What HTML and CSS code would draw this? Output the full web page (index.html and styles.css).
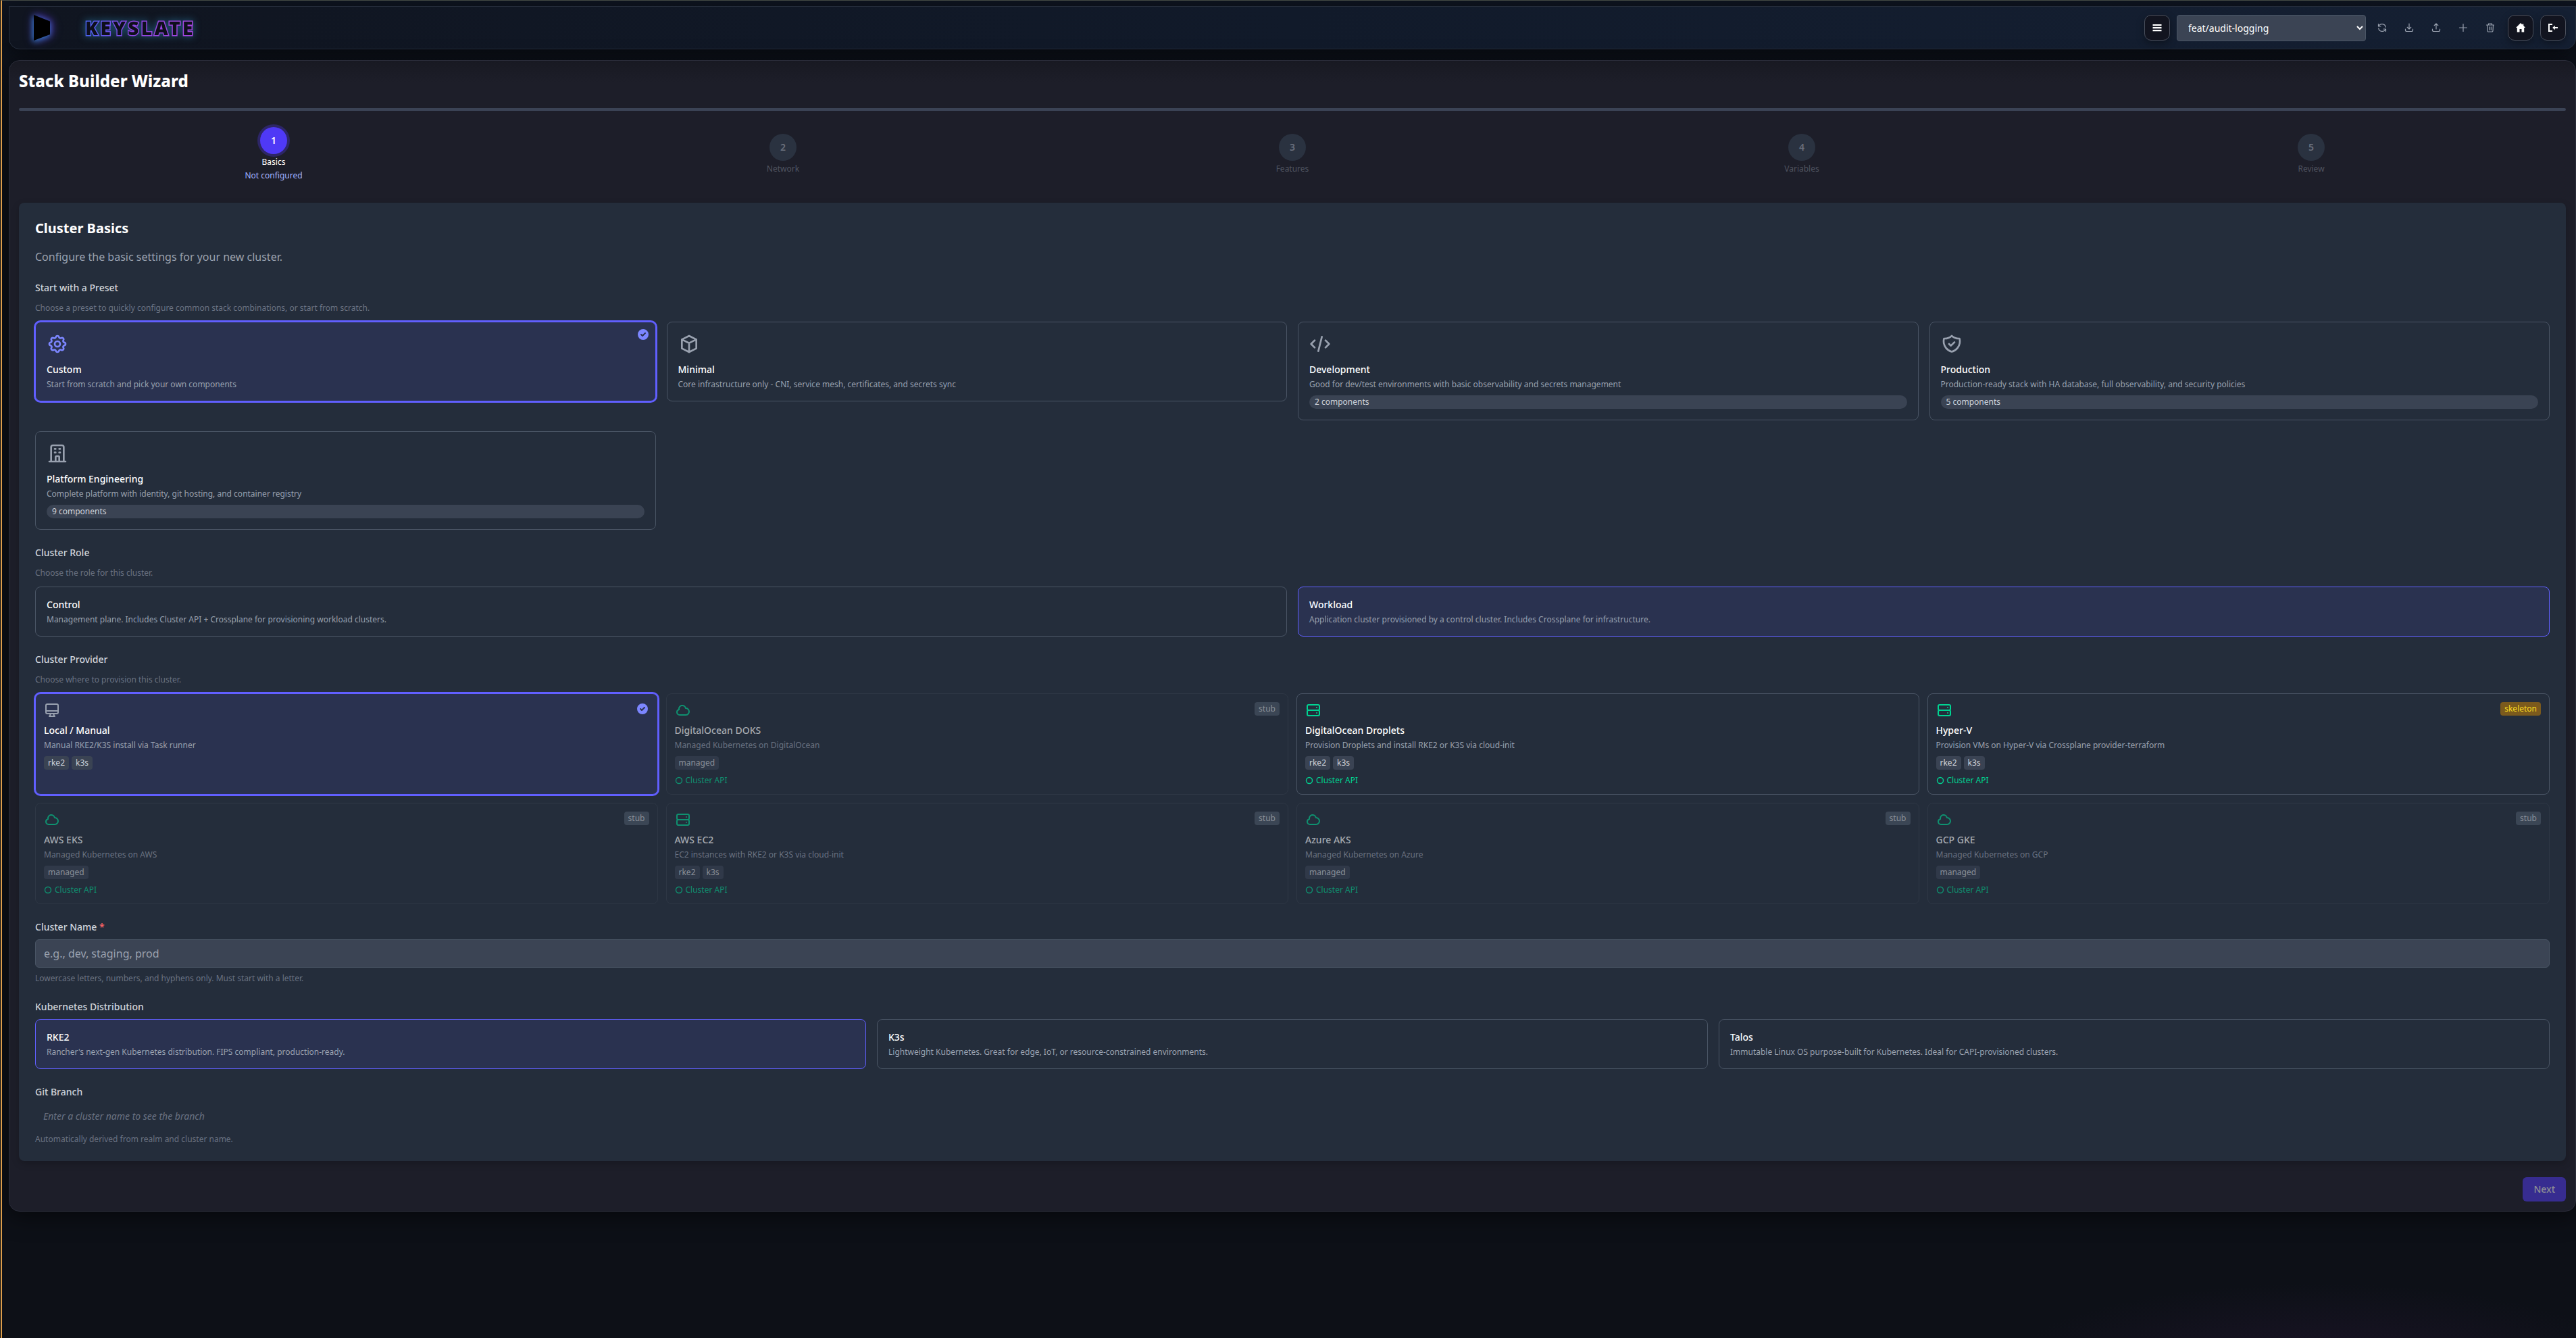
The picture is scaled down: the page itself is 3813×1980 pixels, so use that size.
FILE: index.html
```html
<!DOCTYPE html>
<html lang="en">
<head>
    <meta charset="utf-8">
    <title>Keyslate - Stack Builder Wizard</title>
    <link rel="stylesheet" href="styles.css">
</head>
<body>
    <svg class="sprite" aria-hidden="true">
        <symbol id="cog" viewBox="0 0 24 24"><path d="M10.325 4.317c.426-1.756 2.924-1.756 3.35 0a1.724 1.724 0 002.573 1.066c1.543-.94 3.31.826 2.37 2.37a1.724 1.724 0 001.065 2.572c1.756.426 1.756 2.924 0 3.35a1.724 1.724 0 00-1.066 2.573c.94 1.543-.826 3.31-2.37 2.37a1.724 1.724 0 00-2.572 1.065c-.426 1.756-2.924 1.756-3.35 0a1.724 1.724 0 00-2.573-1.066c-1.543.94-3.31-.826-2.37-2.37a1.724 1.724 0 00-1.065-2.572c-1.756-.426-1.756-2.924 0-3.35a1.724 1.724 0 001.066-2.573c-.94-1.543.826-3.31 2.37-2.37.996.608 2.296.07 2.572-1.065z"/><path d="M15 12a3 3 0 11-6 0 3 3 0 016 0z"/></symbol>
        <symbol id="cube" viewBox="0 0 24 24"><path d="M20 7l-8-4-8 4m16 0l-8 4m8-4v10l-8 4m0-10L4 7m8 4v10M4 7v10l8 4"/></symbol>
        <symbol id="code" viewBox="0 0 24 24"><path d="M10 20l4-16m4 4l4 4-4 4M6 16l-4-4 4-4"/></symbol>
        <symbol id="shield" viewBox="0 0 24 24"><path d="M9 12l2 2 4-4m5.618-4.016A11.955 11.955 0 0112 2.944a11.955 11.955 0 01-8.618 3.040A12.020 12.020 0 003 9c0 5.591 3.824 10.290 9 11.622 5.176-1.332 9-6.030 9-11.622 0-1.042-.133-2.052-.382-3.016z"/></symbol>
        <symbol id="building" viewBox="0 0 24 24"><path d="M19 21V5a2 2 0 00-2-2H7a2 2 0 00-2 2v16m14 0h2m-2 0h-5m-9 0H3m2 0h5M9 7h1m-1 4h1m4-4h1m-1 4h1m-5 10v-5a1 1 0 011-1h2a1 1 0 011 1v5m-4 0h4"/></symbol>
        <symbol id="desktop" viewBox="0 0 24 24"><path d="M9.75 17L9 20l-1 1h8l-1-1-.75-3M3 13h18M5 17h14a2 2 0 002-2V5a2 2 0 00-2-2H5a2 2 0 00-2 2v10a2 2 0 002 2z"/></symbol>
        <symbol id="cloud" viewBox="0 0 24 24"><path d="M3 15a4 4 0 004 4h9a5 5 0 10-.1-9.999 5.002 5.002 0 10-9.78 2.096A4.001 4.001 0 003 15z"/></symbol>
        <symbol id="server" viewBox="0 0 24 24"><path d="M5 12h14M5 12a2 2 0 01-2-2V6a2 2 0 012-2h14a2 2 0 012 2v4a2 2 0 01-2 2M5 12a2 2 0 00-2 2v4a2 2 0 002 2h14a2 2 0 002-2v-4a2 2 0 00-2-2m-2-4h.01M17 16h.01"/></symbol>
        <symbol id="check" viewBox="0 0 20 20"><path fill-rule="evenodd" d="M10 18a8 8 0 100-16 8 8 0 000 16zm3.707-9.293a1 1 0 00-1.414-1.414L9 10.586 7.707 9.293a1 1 0 00-1.414 1.414l2 2a1 1 0 001.414 0l4-4z"/></symbol>
        <symbol id="ring" viewBox="0 0 12 12"><circle cx="6" cy="6" r="4.500"/></symbol>
    </svg>

    <header class="topbar">
        <a class="brand" href="#">
            <svg class="brand-mark" viewBox="0 0 24 38"><path d="M0 0L24 9.500V29L0 38z"/></svg>
            <span class="brand-name">KEYSLATE</span>
        </a>
        <div class="toolbar">
            <button class="square-btn" type="button" aria-label="Menu">
                <svg viewBox="0 0 16 16"><path d="M1.500 3h13v2.200h-13zM1.500 7h13v2.200h-13zM1.500 11h13v2.200h-13z"/></svg>
            </button>
            <div class="branch-tools">
                <select class="branch-select" aria-label="Branch">
                    <option>feat/audit-logging</option>
                </select>
                <button class="icon-btn" type="button" aria-label="Refresh">
                    <svg viewBox="0 0 16 16"><path d="M2.500 2.500v3.500h3.500M2.800 6A5.500 5.500 0 0113.300 7.200M13.500 13.500v-3.500h-3.500M13.200 10A5.500 5.500 0 012.700 8.800"/></svg>
                </button>
                <button class="icon-btn" type="button" aria-label="Pull">
                    <svg viewBox="0 0 16 16"><path d="M8 2v8M5.200 7.300L8 10l2.800-2.700M2.500 10v1.500a2 2 0 002 2h7a2 2 0 002-2V10"/></svg>
                </button>
                <button class="icon-btn" type="button" aria-label="Push">
                    <svg viewBox="0 0 16 16"><path d="M8 10V2M5.200 4.700L8 2l2.800 2.700M2.500 10v1.500a2 2 0 002 2h7a2 2 0 002-2V10"/></svg>
                </button>
                <button class="icon-btn" type="button" aria-label="New branch">
                    <svg viewBox="0 0 16 16"><path d="M8 2.500v11M2.500 8h11"/></svg>
                </button>
                <button class="icon-btn" type="button" aria-label="Delete branch">
                    <svg viewBox="0 0 16 16"><path d="M2.500 4h11M5.500 4V2h5v2M3.500 4l.5 8.500a1.500 1.500 0 001.500 1.500h5a1.500 1.500 0 001.500-1.500l.5-8.500M6.700 6.800v4.400M9.300 6.800v4.400"/></svg>
                </button>
            </div>
            <a class="square-btn" href="#" aria-label="Home">
                <svg viewBox="0 0 16 16"><path d="M8 1l2.500 2.400V2.500h1.800v2.600L15 8h-1.800v6.500H9.500V10h-3v4.500H2.800V8H1z"/></svg>
            </a>
            <button class="square-btn" type="button" aria-label="Log out">
                <svg viewBox="0 0 16 16"><path d="M1 2h6v2H3v8h4v2H1zM7.200 8l3.600-3.300v2.200H15v2.200h-4.200v2.200z"/></svg>
            </button>
        </div>
    </header>

    <main class="wizard">
        <h1>Stack Builder Wizard</h1>
        <div class="progress"></div>

        <ol class="steps">
            <li class="step active">
                <span class="step-number">1</span>
                <span>Basics</span>
                <span class="step-status">Not configured</span>
            </li>
            <li class="step"><span class="step-number">2</span><span>Network</span></li>
            <li class="step"><span class="step-number">3</span><span>Features</span></li>
            <li class="step"><span class="step-number">4</span><span>Variables</span></li>
            <li class="step"><span class="step-number">5</span><span>Review</span></li>
        </ol>

        <form class="panel">
            <h2>Cluster Basics</h2>
            <p class="intro">Configure the basic settings for your new cluster.</p>

            <section class="field">
                <h3>Start with a Preset</h3>
                <p class="hint">Choose a preset to quickly configure common stack combinations, or start from scratch.</p>
                <div class="grid presets">
                    <button class="card selected ringed" type="button">
                        <svg class="icon icon-lg"><use href="#cog"/></svg>
                        <span class="card-title">Custom</span>
                        <span class="card-text">Start from scratch and pick your own components</span>
                        <svg class="check"><use href="#check"/></svg>
                    </button>
                    <button class="card" type="button">
                        <svg class="icon icon-lg"><use href="#cube"/></svg>
                        <span class="card-title">Minimal</span>
                        <span class="card-text">Core infrastructure only - CNI, service mesh, certificates, and secrets sync</span>
                    </button>
                    <button class="card" type="button">
                        <svg class="icon icon-lg"><use href="#code"/></svg>
                        <span class="card-title">Development</span>
                        <span class="card-text">Good for dev/test environments with basic observability and secrets management</span>
                        <span class="count">2 components</span>
                    </button>
                    <button class="card" type="button">
                        <svg class="icon icon-lg"><use href="#shield"/></svg>
                        <span class="card-title">Production</span>
                        <span class="card-text">Production-ready stack with HA database, full observability, and security policies</span>
                        <span class="count">5 components</span>
                    </button>
                    <button class="card" type="button">
                        <svg class="icon icon-lg"><use href="#building"/></svg>
                        <span class="card-title">Platform Engineering</span>
                        <span class="card-text">Complete platform with identity, git hosting, and container registry</span>
                        <span class="count">9 components</span>
                    </button>
                </div>
            </section>

            <section class="field">
                <h3>Cluster Role</h3>
                <p class="hint">Choose the role for this cluster.</p>
                <div class="grid roles">
                    <button class="card" type="button">
                        <span class="card-title">Control</span>
                        <span class="card-text">Management plane. Includes Cluster API + Crossplane for provisioning workload clusters.</span>
                    </button>
                    <button class="card selected" type="button">
                        <span class="card-title">Workload</span>
                        <span class="card-text">Application cluster provisioned by a control cluster. Includes Crossplane for infrastructure.</span>
                    </button>
                </div>
            </section>

            <section class="field">
                <h3>Cluster Provider</h3>
                <p class="hint">Choose where to provision this cluster.</p>
                <div class="grid providers">
                    <button class="card selected ringed" type="button">
                        <span class="card-top"><svg class="icon"><use href="#desktop"/></svg><svg class="check"><use href="#check"/></svg></span>
                        <span class="card-title">Local / Manual</span>
                        <span class="card-text">Manual RKE2/K3S install via Task runner</span>
                        <span class="tags"><span class="tag">rke2</span><span class="tag">k3s</span></span>
                    </button>
                    <button class="card capi disabled" type="button" disabled>
                        <span class="card-top"><svg class="icon"><use href="#cloud"/></svg><span class="tag stub">stub</span></span>
                        <span class="card-title">DigitalOcean DOKS</span>
                        <span class="card-text">Managed Kubernetes on DigitalOcean</span>
                        <span class="tags"><span class="tag">managed</span></span>
                        <span class="api"><svg><use href="#ring"/></svg>Cluster API</span>
                    </button>
                    <button class="card capi" type="button">
                        <span class="card-top"><svg class="icon"><use href="#server"/></svg></span>
                        <span class="card-title">DigitalOcean Droplets</span>
                        <span class="card-text">Provision Droplets and install RKE2 or K3S via cloud-init</span>
                        <span class="tags"><span class="tag">rke2</span><span class="tag">k3s</span></span>
                        <span class="api"><svg><use href="#ring"/></svg>Cluster API</span>
                    </button>
                    <button class="card capi" type="button">
                        <span class="card-top"><svg class="icon"><use href="#server"/></svg><span class="tag skeleton">skeleton</span></span>
                        <span class="card-title">Hyper-V</span>
                        <span class="card-text">Provision VMs on Hyper-V via Crossplane provider-terraform</span>
                        <span class="tags"><span class="tag">rke2</span><span class="tag">k3s</span></span>
                        <span class="api"><svg><use href="#ring"/></svg>Cluster API</span>
                    </button>
                    <button class="card capi disabled" type="button" disabled>
                        <span class="card-top"><svg class="icon"><use href="#cloud"/></svg><span class="tag stub">stub</span></span>
                        <span class="card-title">AWS EKS</span>
                        <span class="card-text">Managed Kubernetes on AWS</span>
                        <span class="tags"><span class="tag">managed</span></span>
                        <span class="api"><svg><use href="#ring"/></svg>Cluster API</span>
                    </button>
                    <button class="card capi disabled" type="button" disabled>
                        <span class="card-top"><svg class="icon"><use href="#server"/></svg><span class="tag stub">stub</span></span>
                        <span class="card-title">AWS EC2</span>
                        <span class="card-text">EC2 instances with RKE2 or K3S via cloud-init</span>
                        <span class="tags"><span class="tag">rke2</span><span class="tag">k3s</span></span>
                        <span class="api"><svg><use href="#ring"/></svg>Cluster API</span>
                    </button>
                    <button class="card capi disabled" type="button" disabled>
                        <span class="card-top"><svg class="icon"><use href="#cloud"/></svg><span class="tag stub">stub</span></span>
                        <span class="card-title">Azure AKS</span>
                        <span class="card-text">Managed Kubernetes on Azure</span>
                        <span class="tags"><span class="tag">managed</span></span>
                        <span class="api"><svg><use href="#ring"/></svg>Cluster API</span>
                    </button>
                    <button class="card capi disabled" type="button" disabled>
                        <span class="card-top"><svg class="icon"><use href="#cloud"/></svg><span class="tag stub">stub</span></span>
                        <span class="card-title">GCP GKE</span>
                        <span class="card-text">Managed Kubernetes on GCP</span>
                        <span class="tags"><span class="tag">managed</span></span>
                        <span class="api"><svg><use href="#ring"/></svg>Cluster API</span>
                    </button>
                </div>
            </section>

            <section class="field compact">
                <label for="cluster-name">Cluster Name <span class="required">*</span></label>
                <input class="text-input" id="cluster-name" type="text" placeholder="e.g., dev, staging, prod">
                <p class="hint">Lowercase letters, numbers, and hyphens only. Must start with a letter.</p>
            </section>

            <section class="field compact">
                <h3>Kubernetes Distribution</h3>
                <div class="grid distros">
                    <button class="card selected" type="button">
                        <span class="card-title">RKE2</span>
                        <span class="card-text">Rancher's next-gen Kubernetes distribution. FIPS compliant, production-ready.</span>
                    </button>
                    <button class="card" type="button">
                        <span class="card-title">K3s</span>
                        <span class="card-text">Lightweight Kubernetes. Great for edge, IoT, or resource-constrained environments.</span>
                    </button>
                    <button class="card" type="button">
                        <span class="card-title">Talos</span>
                        <span class="card-text">Immutable Linux OS purpose-built for Kubernetes. Ideal for CAPI-provisioned clusters.</span>
                    </button>
                </div>
            </section>

            <section class="field compact">
                <h3>Git Branch</h3>
                <p class="branch-preview">Enter a cluster name to see the branch</p>
                <p class="hint">Automatically derived from realm and cluster name.</p>
            </section>
        </form>

        <div class="actions">
            <button class="next-btn" type="button" disabled>Next</button>
        </div>
    </main>
</body>
</html>
```

FILE: styles.css
```css
* {
    box-sizing: border-box;
}

html {
    padding-left: 1px;
    background: #0b0e14;
}

body {
    margin: 0;
    min-height: 100vh;
    padding: 8px 0 0 10px;
    border-top: 1px solid #454a45;
    border-left: 2px solid #dd9e4c;
    background:
        radial-gradient(ellipse 460px 120px at 90% 102%, #1a1426, transparent),
        linear-gradient(#0e1420, #0d1017 160px);
    color: #fff;
    font-family: "Noto Sans", sans-serif;
    font-size: 14px;
    line-height: 20px;
}

h1, h2, h3, p, ol {
    margin: 0;
    padding: 0;
}

button, input, select {
    font: inherit;
    color: inherit;
}

svg {
    fill: none;
    stroke: currentColor;
    stroke-width: 2;
    stroke-linecap: round;
    stroke-linejoin: round;
}

.sprite {
    position: absolute;
    width: 0;
    height: 0;
}

/* top bar */
.topbar {
    display: flex;
    align-items: center;
    justify-content: space-between;
    height: 64px;
    padding: 0 14px 0 36px;
    border: 1px solid #252d3b;
    border-radius: 0 0 16px 16px;
    background: linear-gradient(90deg, #101520, #111a2a 50%, #152033);
    box-shadow: 0 8px 32px rgba(0, 0, 0, 0.5);
}

.brand {
    display: flex;
    align-items: center;
    gap: 52px;
    text-decoration: none;
}

.brand-mark {
    width: 24px;
    height: 38px;
    fill: #000;
    stroke: none;
    filter: drop-shadow(-1px 2px 4px #2f7dc0) drop-shadow(2px -1px 6px #4c33b0);
}

.brand-name {
    background: linear-gradient(90deg, #4a63f0, #8b46e0 40%, #a746e0);
    -webkit-background-clip: text;
    background-clip: text;
    color: #0e0f1c;
    -webkit-text-stroke: 3px transparent;
    paint-order: stroke fill;
    font-size: 28px;
    font-weight: 900;
    letter-spacing: 0.12em;
    line-height: 40px;
    filter: drop-shadow(0 0 6px rgba(45, 140, 190, 0.6));
}

.toolbar {
    display: flex;
    align-items: center;
    gap: 10px;
}

.branch-tools {
    display: flex;
    align-items: center;
    gap: 8px;
}

.square-btn {
    display: flex;
    align-items: center;
    justify-content: center;
    width: 38px;
    height: 38px;
    padding: 0;
    border: 1px solid #4a4f5c;
    border-radius: 10px;
    background: #12141f;
    box-shadow: 0 4px 12px rgba(0, 0, 0, 0.35);
    color: #fff;
}

.square-btn svg {
    width: 16px;
    height: 16px;
    fill: currentColor;
    stroke: none;
}

.branch-select {
    width: 280px;
    height: 39px;
    padding: 0 12px;
    border: 1px solid #4a5565;
    border-radius: 4px;
    background: #3b4454;
}

.icon-btn {
    display: flex;
    align-items: center;
    justify-content: center;
    width: 32px;
    height: 32px;
    padding: 0;
    border: 0;
    background: none;
    color: #99a1af;
}

.icon-btn svg {
    width: 16px;
    height: 16px;
    stroke-width: 1.2;
}

/* wizard */
.wizard {
    margin-top: 16px;
    padding: 14px;
    border: 1px solid #2a2c39;
    border-radius: 16px;
    background: linear-gradient(#181922, #1d1e29 32px);
    box-shadow: 0 8px 32px rgba(0, 0, 0, 0.5);
}

h1 {
    font-size: 24px;
    font-weight: 800;
    line-height: 32px;
}

.progress {
    height: 4px;
    margin: 24px 0;
    border-radius: 2px;
    background: #3b4355;
}

.steps {
    display: flex;
    align-items: center;
    list-style: none;
}

.step {
    display: flex;
    flex: 1;
    flex-direction: column;
    align-items: center;
    gap: 4px;
    color: #505460;
    font-size: 12px;
    line-height: 16px;
}

.step-number {
    width: 40px;
    height: 40px;
    border-radius: 50%;
    background: #2a3240;
    color: #6a707d;
    font-size: 14px;
    font-weight: 600;
    line-height: 40px;
    text-align: center;
}

.step.active {
    color: #fff;
}

.step.active .step-number {
    background: #4f39f6;
    box-shadow: 0 0 0 4px #2d2667;
    color: #fff;
}

.step-status {
    color: #a3b3ff;
}

.panel {
    display: flex;
    flex-direction: column;
    gap: 24px;
    margin-top: 32px;
    padding: 24px;
    border-radius: 8px;
    background: #242d3b;
    box-shadow: 0 4px 12px rgba(0, 0, 0, 0.2);
}

h2 {
    margin-bottom: -8px;
    font-size: 20px;
    font-weight: 700;
    line-height: 28px;
}

.intro {
    color: #99a1af;
    font-size: 16px;
    line-height: 24px;
}

.field {
    display: flex;
    flex-direction: column;
    gap: 12px;
}

.field.compact {
    gap: 8px;
}

h3, label {
    color: #d1d5dc;
    font-size: 14px;
    font-weight: 500;
    line-height: 20px;
}

.required {
    color: #ff6467;
}

.hint {
    color: #6a7282;
    font-size: 12px;
    line-height: 16px;
}

.grid {
    display: grid;
    align-items: start;
    gap: 16px;
}

.presets {
    grid-template-columns: repeat(4, 1fr);
}

.roles {
    grid-template-columns: repeat(2, 1fr);
}

.providers {
    grid-template-columns: repeat(4, 1fr);
    align-items: stretch;
    gap: 12px;
}

.distros {
    grid-template-columns: repeat(3, 1fr);
}

/* cards */
.card {
    position: relative;
    display: flex;
    flex-direction: column;
    padding: 16px;
    border: 1px solid #4a5565;
    border-radius: 8px;
    background: none;
    text-align: left;
}

.card.selected {
    border-color: #615fff;
    background: #2a3250;
}

.card.ringed {
    box-shadow: 0 0 0 2px #615fff;
}

.card.disabled {
    border-color: #2e3745;
}

.icon {
    width: 24px;
    height: 24px;
    color: #99a1af;
}

.icon-lg {
    width: 32px;
    height: 32px;
    margin-bottom: 12px;
}

.selected .icon-lg {
    color: #7c86ff;
}

.check {
    width: 20px;
    height: 20px;
    fill: #7c86ff;
    stroke: none;
}

.presets .check {
    position: absolute;
    top: 8px;
    right: 8px;
}

.card-title {
    font-weight: 500;
}

.card-text {
    margin-top: 4px;
    color: #99a1af;
    font-size: 12px;
    line-height: 16px;
}

.count {
    margin-top: 8px;
    padding: 2px 8px;
    border-radius: 10px;
    background: #3a4353;
    color: #d1d5dc;
    font-size: 12px;
    line-height: 16px;
}

.providers .card {
    padding: 12px;
}

.card-top {
    display: flex;
    align-items: flex-start;
    justify-content: space-between;
    margin-bottom: 8px;
}

.tags {
    display: flex;
    gap: 4px;
    margin-top: 8px;
}

.tag {
    padding: 2px 6px;
    border-radius: 4px;
    background: #3a4353;
    color: #d1d5dc;
    font-size: 12px;
    line-height: 16px;
}

.tag.skeleton {
    background: #7b5a1d;
    color: #fddc20;
}

.api {
    display: flex;
    align-items: center;
    gap: 4px;
    margin-top: 8px;
    color: #00d492;
    font-size: 12px;
    line-height: 16px;
}

.api svg {
    width: 12px;
    height: 12px;
    stroke-width: 1.4;
}

.capi .icon {
    color: #00d492;
}

.disabled .card-title {
    color: #a7abb1;
}

.disabled .card-text {
    color: #6a7281;
}

.disabled .tag {
    background: #303949;
    color: #8a9099;
}

.disabled .tag.stub {
    background: #3b4655;
}

.disabled .icon,
.disabled .api {
    color: #0f9170;
}

/* inputs */
.text-input {
    width: 100%;
    height: 42px;
    padding: 8px 12px;
    border: 1px solid #4a5565;
    border-radius: 6px;
    background: #3b4454;
    font-size: 16px;
    line-height: 24px;
}

.text-input::placeholder {
    color: #99a1af;
}

.branch-preview {
    padding: 8px 12px;
    color: #6a7282;
    font-style: italic;
}

.actions {
    display: flex;
    justify-content: flex-end;
    margin-top: 24px;
}

.next-btn {
    padding: 8px 16px;
    border: 0;
    border-radius: 6px;
    background: #372c90;
    color: #8e8f95;
    font-weight: 500;
}
```
